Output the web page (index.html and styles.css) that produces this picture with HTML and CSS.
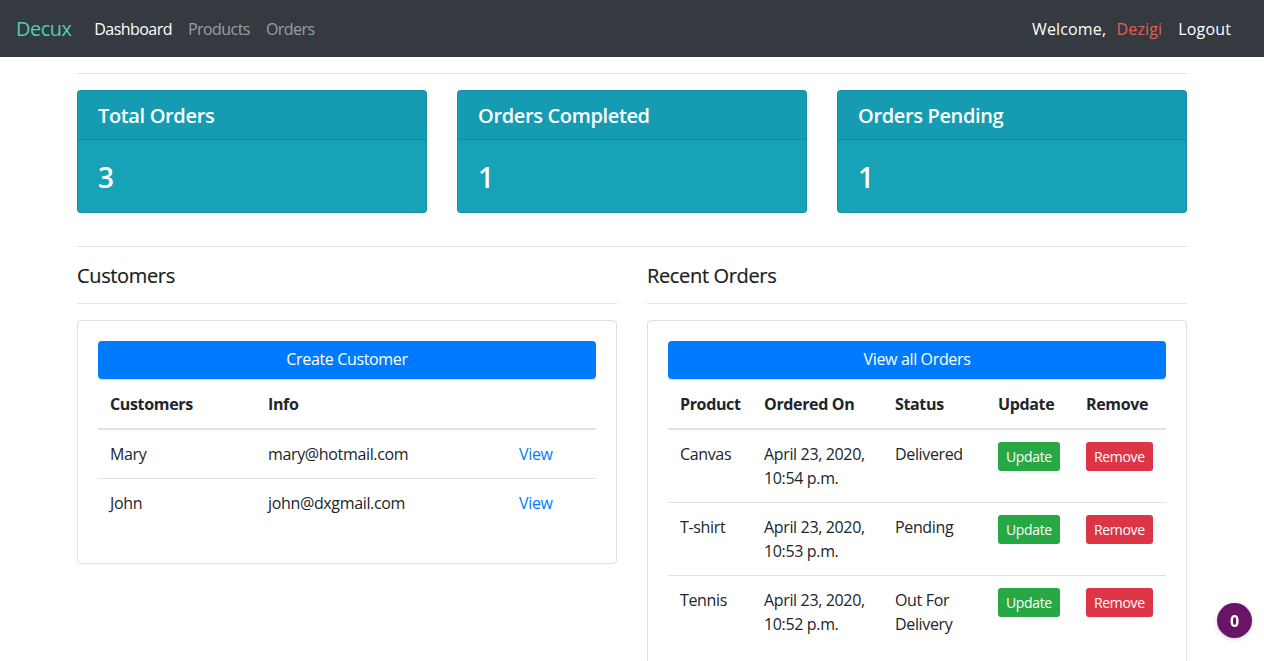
FILE: index.html
```html
<!DOCTYPE html>
<html lang="en">
<head>
<meta charset="utf-8">
<title>Decux Dashboard</title>
<link rel="stylesheet" href="styles.css">
</head>
<body>
<nav class="navbar">
  <a class="brand" href="#">Decux</a>
  <ul class="nav">
    <li><a class="nav-link active" href="#">Dashboard</a></li>
    <li><a class="nav-link" href="#">Products</a></li>
    <li><a class="nav-link" href="#">Orders</a></li>
  </ul>
  <div class="nav-right">
    <span class="welcome">Welcome, <span class="user">Dezigi</span></span>
    <a class="nav-link logout" href="#">Logout</a>
  </div>
</nav>

<div class="container">
  <hr class="rule">
  <div class="stats">
    <div class="stat-card">
      <div class="stat-header"><h5>Total Orders</h5></div>
      <div class="stat-body"><h3>3</h3></div>
    </div>
    <div class="stat-card">
      <div class="stat-header"><h5>Orders Completed</h5></div>
      <div class="stat-body"><h3>1</h3></div>
    </div>
    <div class="stat-card">
      <div class="stat-header"><h5>Orders Pending</h5></div>
      <div class="stat-body"><h3>1</h3></div>
    </div>
  </div>
  <hr class="rule">
  <div class="panels">
    <div class="panel">
      <h5 class="panel-title">Customers</h5>
      <hr class="rule">
      <div class="card">
        <a class="btn-block" href="#">Create Customer</a>
        <table class="table cust">
          <thead>
            <tr><th class="c1">Customers</th><th class="c2">Info</th><th class="c3"></th></tr>
          </thead>
          <tbody>
            <tr><td>Mary</td><td>mary@hotmail.com</td><td><a class="link" href="#">View</a></td></tr>
            <tr><td>John</td><td>john@dxgmail.com</td><td><a class="link" href="#">View</a></td></tr>
          </tbody>
        </table>
      </div>
    </div>
    <div class="panel">
      <h5 class="panel-title">Recent Orders</h5>
      <hr class="rule">
      <div class="card">
        <a class="btn-block" href="#">View all Orders</a>
        <table class="table orders">
          <thead>
            <tr><th class="o1">Product</th><th class="o2">Ordered On</th><th class="o3">Status</th><th class="o4">Update</th><th class="o5">Remove</th></tr>
          </thead>
          <tbody>
            <tr><td>Canvas</td><td>April 23, 2020, 10:54 p.m.</td><td>Delivered</td><td><a class="btn-sm update" href="#">Update</a></td><td><a class="btn-sm remove" href="#">Remove</a></td></tr>
            <tr><td>T-shirt</td><td>April 23, 2020, 10:53 p.m.</td><td>Pending</td><td><a class="btn-sm update" href="#">Update</a></td><td><a class="btn-sm remove" href="#">Remove</a></td></tr>
            <tr><td>Tennis</td><td>April 23, 2020, 10:52 p.m.</td><td>Out For Delivery</td><td><a class="btn-sm update" href="#">Update</a></td><td><a class="btn-sm remove" href="#">Remove</a></td></tr>
          </tbody>
        </table>
      </div>
    </div>
  </div>
</div>

<div class="badge">0</div>
</body>
</html>
```

FILE: styles.css
```css
* { box-sizing: border-box; }
html, body { margin: 0; }
body {
  font-family: "Open Sans", "Noto Sans", sans-serif;
  font-size: 16px;
  line-height: 1.5;
  color: #212529;
  background: #fff;
  letter-spacing: -0.35px;
}
a { text-decoration: none; }

.navbar {
  display: flex;
  align-items: center;
  background: #343a40;
  height: 57px;
  padding: 8px 16px;
  letter-spacing: -0.55px;
}
.brand {
  color: #4ecfae;
  font-size: 20px;
  line-height: 30px;
  margin-right: 15px;
}
.nav {
  display: flex;
  list-style: none;
  margin: 0;
  padding: 0;
}
.nav-link {
  display: block;
  padding: 8px 8px;
  color: rgba(255,255,255,.5);
}
.nav-link.active { color: #fff; }
.nav-right {
  margin-left: auto;
  display: flex;
  align-items: center;
  padding-right: 8px;
  letter-spacing: 0.15px;
}
.welcome { color: #fff; margin-right: 8px; }
.user { color: #e35d5b; margin-left: 6px; }
.logout { color: #fff; padding-right: 9px; }

.container {
  width: 1140px;
  margin: 0 auto;
  padding: 0 15px;
}
.rule {
  border: 0;
  border-top: 1px solid rgba(0,0,0,.1);
  margin: 16px 0;
  height: 0;
}

.stats {
  display: grid;
  grid-template-columns: repeat(3, 1fr);
  gap: 30px;
  margin-bottom: 33px;
}
.stat-card {
  background: #17a2b8;
  border: 1px solid rgba(0,0,0,.125);
  border-radius: 4px;
  color: #fff;
  overflow: hidden;
}
.stat-header {
  background: rgba(0,0,0,.03);
  border-bottom: 1px solid rgba(0,0,0,.125);
  padding: 13px 20px 11px;
}
.stat-header h5 {
  margin: 0;
  font-size: 20px;
  line-height: 24px;
  font-weight: 600;
}
.stat-body { padding: 21px 20px 19px; }
.stat-body h3 {
  margin: 0;
  font-size: 28px;
  line-height: 32px;
  font-weight: 600;
}

.panels {
  display: grid;
  grid-template-columns: 1fr 1fr;
  gap: 30px;
}
.panel-title {
  margin: 0;
  padding-top: 1px;
  font-size: 20px;
  line-height: 23px;
  font-weight: 500;
  color: #1a1d20;
  -webkit-text-stroke: 0.2px #1a1d20;
}
.card {
  border: 1px solid rgba(0,0,0,.125);
  border-radius: 4px;
  padding: 20px;
}
.btn-block {
  display: block;
  text-align: center;
  background: #007bff;
  color: #fff;
  border-radius: 4px;
  padding: 6px 12px;
  line-height: 24px;
  height: 38px;
}
.table {
  width: 100%;
  border-collapse: collapse;
  table-layout: fixed;
  margin-bottom: 16px;
}
.table th, .table td {
  padding: 12px;
  text-align: left;
  vertical-align: top;
  border-top: 1px solid #dee2e6;
}
.table thead th {
  border-bottom: 2px solid #dee2e6;
  font-weight: 700;
}
.table tbody tr:first-child td { border-top: 0; }
.c1 { width: 158px; }
.c3 { width: 89px; }
.link { color: #007bff; }

.o1 { width: 84px; }
.o2 { width: 131px; }
.o3 { width: 103px; }
.o4 { width: 88px; }
.btn-sm {
  display: inline-block;
  font-size: 14px;
  line-height: 21px;
  padding: 4px 8px;
  border-radius: 3px;
  color: #fff;
}
.update { background: #28a745; }
.remove { background: #dc3545; }

.badge {
  position: fixed;
  right: 12px;
  bottom: 23px;
  width: 35px;
  height: 35px;
  border-radius: 50%;
  background: #6a1468;
  color: #fff;
  font-weight: 700;
  font-size: 16px;
  display: flex;
  align-items: center;
  justify-content: center;
  box-shadow: 0 1px 4px rgba(0,0,0,.2);
}
```
